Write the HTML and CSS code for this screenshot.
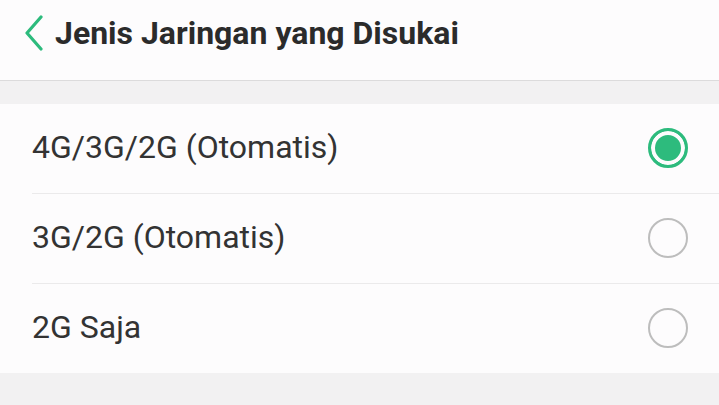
FILE: index.html
```html
<!DOCTYPE html>
<html lang="id">

<head>
  <meta charset="UTF-8">
  <meta name="viewport" content="width=device-width, initial-scale=1.0">
  <title>Jenis Jaringan yang Disukai</title>
  <link rel="stylesheet" href="styles.css">
</head>

<body>
  <div class="header">
    <svg class="back" width="22" height="36" viewBox="0 0 22 36">
      <path d="M18 2 L4 18 L18 34" fill="none" stroke="#2dbb7d" stroke-width="3.2" stroke-linecap="round" stroke-linejoin="round" />
    </svg>
    <h1 class="title">Jenis Jaringan yang Disukai</h1>
  </div>
  <div class="gap"></div>
  <ul class="options">
    <li class="option">
      <span class="label">4G/3G/2G (Otomatis)</span>
      <span class="radio checked"></span>
    </li>
    <li class="option">
      <span class="label">3G/2G (Otomatis)</span>
      <span class="radio"></span>
    </li>
    <li class="option">
      <span class="label">2G Saja</span>
      <span class="radio"></span>
    </li>
  </ul>
</body>

</html>
```
FILE: styles.css
```css
body {
  margin: 0;
  background: #f2f1f2;
  font-family: Roboto, "Noto Sans", sans-serif;
  color: #333;
}

.header {
  height: 79px;
  background: #fdfcfd;
  border-bottom: 1px solid #dcdbdc;
  display: flex;
  align-items: center;
  padding-left: 23px;
  padding-bottom: 1px;
  box-sizing: content-box;
}

.back {
  margin-top: -14px;
  flex-shrink: 0;
}

.title {
  margin: -14px 0 0 10px;
  font-size: 32px;
  font-weight: 700;
  color: #2b2b2b;
}

.gap {
  height: 23px;
}

.options {
  list-style: none;
  margin: 0;
  padding: 0 0 0 32px;
  background: #fdfcfd;
}

.option {
  height: 89px;
  display: flex;
  align-items: center;
  justify-content: space-between;
  padding-right: 31px;
  border-bottom: 1px solid #ebeaeb;
}

.option:last-child {
  border-bottom: none;
}

.label {
  font-size: 32px;
  color: #333;
  margin-top: -3px;
}

.radio {
  width: 36px;
  height: 36px;
  border: 2px solid #bdbdbd;
  border-radius: 50%;
  box-sizing: content-box;
  margin-top: -2px;
}

.radio.checked {
  width: 34px;
  height: 34px;
  border: 3px solid #2dbb7d;
  background: #2dbb7d;
  box-shadow: inset 0 0 0 4px #fdfcfd;
}
```
